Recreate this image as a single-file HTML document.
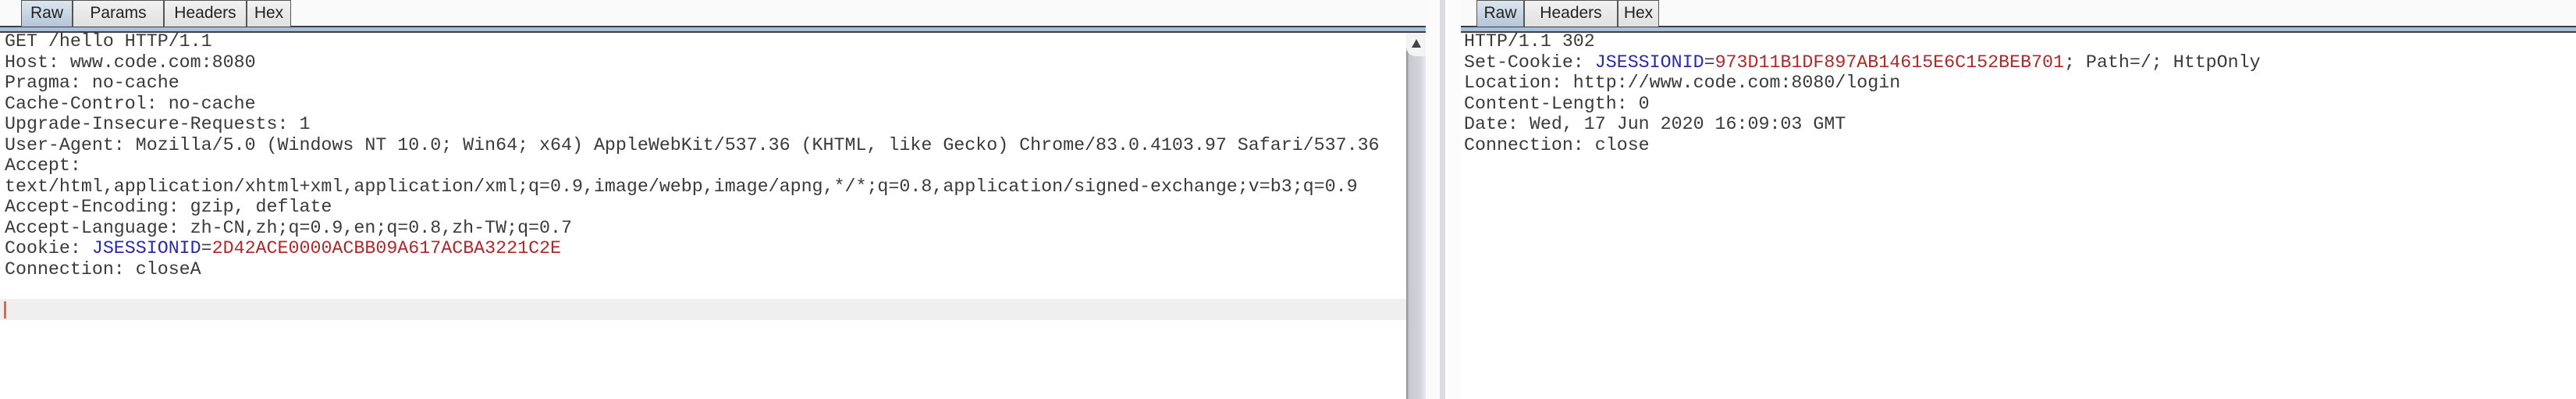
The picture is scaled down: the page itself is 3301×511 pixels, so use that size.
<!DOCTYPE html>
<html><head><meta charset="utf-8"><style>
body{margin:0;width:3301px;height:511px;background:#fff;position:relative;overflow:hidden;font-family:"Liberation Sans",sans-serif}
.bar{position:absolute;top:0;height:33px;background:#fafafa}
.line{position:absolute;top:33px;height:9px;background:#a9bfd6;border-top:2px solid #3a3f4a;border-bottom:2px solid #3a3f4a;box-sizing:border-box}
.tab{position:absolute;top:0;height:34px;box-sizing:border-box;border:1.5px solid #555;border-bottom:none;background:linear-gradient(#f2f2f2,#e0e0e0);font-size:21px;line-height:32px;text-align:center;color:#222}
.tab.sel{background:linear-gradient(#dde6ef,#b4c6d8)}
.txt{position:absolute;top:40px;font-family:"Liberation Mono",monospace;font-size:23.3px;line-height:26.5px;color:#3a3a3a;white-space:pre}
.b{color:#2a2aa8}.r{color:#b02828}
</style></head><body>
<div class="bar" style="left:0;width:1827px"></div>
<div class="bar" style="left:1872px;width:1429px"></div>
<div class="line" style="left:0;width:1827px"></div>
<div class="line" style="left:1872px;width:1429px"></div>
<div class="tab sel" style="left:27px;width:66px">Raw</div>
<div class="tab" style="left:93px;width:117px">Params</div>
<div class="tab" style="left:210px;width:106px">Headers</div>
<div class="tab" style="left:316px;width:57px">Hex</div>
<div class="tab sel" style="left:1892px;width:61px">Raw</div>
<div class="tab" style="left:1953px;width:120px">Headers</div>
<div class="tab" style="left:2073px;width:53px">Hex</div>
<div style="position:absolute;left:0;top:383px;width:1802px;height:27px;background:#efefef"></div>
<div style="position:absolute;left:5px;top:386px;width:3px;height:22px;background:#f06030"></div>
<div style="position:absolute;left:1802px;top:42px;width:25px;height:469px;background:linear-gradient(90deg,#888,#c8c8d0 15%,#d4d4dc 70%,#e8e8ec)"></div>
<div style="position:absolute;left:1802px;top:42px;width:25px;height:30px;background:#f4f4f4;border-radius:0 0 0 12px"></div>
<div style="position:absolute;left:1809px;top:50px;width:0;height:0;border-left:6px solid transparent;border-right:6px solid transparent;border-bottom:11px solid #444"></div>
<div style="position:absolute;left:1827px;top:0;width:18px;height:511px;background:#fbfbfb"></div>
<div style="position:absolute;left:1845px;top:0;width:7px;height:511px;background:#dcdce2"></div>
<div style="position:absolute;left:1852px;top:0;width:20px;height:511px;background:#fcfcfc"></div>
<div class="txt" style="left:6px">GET /hello HTTP/1.1
Host: www.code.com:8080
Pragma: no-cache
Cache-Control: no-cache
Upgrade-Insecure-Requests: 1
User-Agent: Mozilla/5.0 (Windows NT 10.0; Win64; x64) AppleWebKit/537.36 (KHTML, like Gecko) Chrome/83.0.4103.97 Safari/537.36
Accept:
text/html,application/xhtml+xml,application/xml;q=0.9,image/webp,image/apng,*/*;q=0.8,application/signed-exchange;v=b3;q=0.9
Accept-Encoding: gzip, deflate
Accept-Language: zh-CN,zh;q=0.9,en;q=0.8,zh-TW;q=0.7
Cookie: <span class="b">JSESSIONID</span>=<span class="r">2D42ACE0000ACBB09A617ACBA3221C2E</span>
Connection: closeA</div>
<div class="txt" style="left:1876px">HTTP/1.1 302
Set-Cookie: <span class="b">JSESSIONID</span>=<span class="r">973D11B1DF897AB14615E6C152BEB701</span>; Path=/; HttpOnly
Location: http://www.code.com:8080/login
Content-Length: 0
Date: Wed, 17 Jun 2020 16:09:03 GMT
Connection: close</div>
</body></html>
